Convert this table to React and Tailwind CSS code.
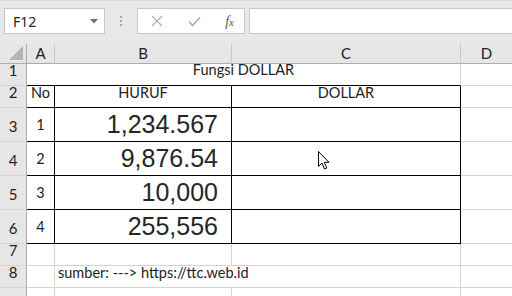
import React from 'react';

const font = { fontFamily: 'Lato, "Noto Sans", sans-serif' };

const RowHead = ({ n, top }) => (
  <div className={`flex justify-center bg-[#e6e6e6] border-r border-r-[#ababab] border-b border-b-[#d4d4d4] text-[15px] text-[#222] ${top ? 'items-start pt-[2px]' : 'items-end pb-[4px]'}`}>
    {n}
  </div>
);

const Pointer = () => (
  <svg width="13" height="20" viewBox="0 0 13 20" className="absolute left-[318px] top-[151px]">
    <path d="M0.5 0.5 L0.5 15.5 L4 12 L6.5 18 L8.8 17 L6.3 11.3 L11 11.3 Z" fill="#fff" stroke="#000" strokeWidth="1" strokeLinejoin="miter" />
  </svg>
);

const data = [
  ['1', '1,234.567'],
  ['2', '9,876.54'],
  ['3', '10,000'],
  ['4', '255,556'],
];

export default function App() {
  return (
    <div className="relative w-[512px] h-[296px] overflow-hidden bg-white text-[#222]" style={font}>
      {/* formula bar */}
      <div className="h-[44px] bg-[#e8e8e8] border-t border-[#d8d8d8] flex items-start pt-[7px] pl-[4px]">
        <div className="w-[101px] h-[26px] bg-white border border-[#c6c6c6] flex items-center justify-between pl-[8px] pr-[6px]">
          <span className="text-[14px] text-[#222]" style={{ fontFamily: '"Noto Sans", sans-serif' }}>F12</span>
          <svg width="8" height="5" viewBox="0 0 8 5"><path d="M0 0 H8 L4 4.5 Z" fill="#707070" /></svg>
        </div>
        <div className="w-[32px] h-[26px] flex flex-col items-center justify-center gap-[2px]">
          <span className="w-[2px] h-[2px] bg-[#a8a8a8]" />
          <span className="w-[2px] h-[2px] bg-[#a8a8a8]" />
          <span className="w-[2px] h-[2px] bg-[#a8a8a8]" />
        </div>
        <div className="w-[108px] h-[26px] bg-white border border-[#c6c6c6] flex items-center pl-[13px] pr-[10px] justify-between">
          <svg width="12" height="12" viewBox="0 0 12 12"><path d="M1 1 L11 11 M11 1 L1 11" stroke="#b0b0b0" strokeWidth="1.3" /></svg>
          <svg width="13" height="11" viewBox="0 0 13 11"><path d="M1 5.5 L4.5 9.5 L12 1.5" stroke="#b0b0b0" strokeWidth="1.8" fill="none" /></svg>
          <span className="text-[14px] italic text-[#555]" style={{ fontFamily: '"Liberation Serif", serif' }}>
            f<span className="text-[11px]">x</span>
          </span>
        </div>
        <div className="ml-[4px] flex-1 h-[26px] bg-white border border-[#c6c6c6] -mr-[2px]" />
      </div>

      {/* sheet */}
      <div className="grid grid-cols-[27px_28px_177px_229px_1fr] grid-rows-[20px_22px_22px_34px_34px_34px_34px_22px_22px_1fr] h-[252px] text-[14.5px]">
        {/* header row */}
        <div className="relative bg-[#e6e6e6] border-r border-r-[#ababab] border-b border-b-[#ababab]">
          <svg width="14" height="14" viewBox="0 0 14 14" className="absolute right-[3px] bottom-[3px]"><path d="M14 0 V14 H0 Z" fill="#b4b4b4" /></svg>
        </div>
        <div className="bg-[#e6e6e6] flex items-center justify-center border-b border-[#ababab] border-r border-r-[#c8c8c8] text-[15px]">A</div>
        <div className="bg-[#e6e6e6] flex items-center justify-center border-b border-[#ababab] border-r border-r-[#c8c8c8] text-[15px]">B</div>
        <div className="bg-[#e6e6e6] flex items-center justify-center border-b border-[#ababab] border-r border-r-[#c8c8c8] text-[15px]">C</div>
        <div className="bg-[#e6e6e6] flex items-center justify-center border-b border-[#ababab] text-[15px]">D</div>

        {/* row 1 */}
        <RowHead n={1} />
        <div className="col-span-3 flex items-end justify-center pb-[4px] border-b border-black border-r border-r-[#d4d4d4]">Fungsi DOLLAR</div>
        <div className="border-b border-[#d4d4d4]" />

        {/* row 2 */}
        <RowHead n={2} />
        <div className="flex items-end justify-center pb-[3px] border-r border-b border-black">No</div>
        <div className="flex items-end justify-center pb-[3px] border-r border-b border-black">HURUF</div>
        <div className="flex items-end justify-center pb-[3px] border-r border-b border-black">DOLLAR</div>
        <div className="border-b border-[#d4d4d4]" />

        {/* rows 3-6 */}
        {data.map(([no, val], i) => (
          <React.Fragment key={no}>
            <RowHead n={i + 3} />
            <div className="flex items-center justify-center border-r border-b border-black">{no}</div>
            <div className="flex items-center justify-end pr-[13px] border-r border-b border-black text-[25px] text-[#262626]" style={{ fontFamily: '"Liberation Sans", Arial, sans-serif' }}>{val}</div>
            <div className="border-r border-b border-black" />
            <div className="border-b border-[#d4d4d4]" />
          </React.Fragment>
        ))}

        {/* row 7 */}
        <RowHead n={7} />
        <div className="border-r border-b border-[#d4d4d4]" />
        <div className="border-r border-b border-[#d4d4d4]" />
        <div className="border-r border-b border-[#d4d4d4]" />
        <div className="border-b border-[#d4d4d4]" />

        {/* row 8 */}
        <RowHead n={8} />
        <div className="border-r border-b border-[#d4d4d4]" />
        <div className="col-span-2 flex items-end pl-[3px] pb-[3px] border-r border-b border-[#d4d4d4] whitespace-nowrap">sumber: ---&gt; https://ttc.web.id</div>
        <div className="border-b border-[#d4d4d4]" />

        {/* row 9 */}
        <RowHead n={9} top />
        <div className="border-r border-[#d4d4d4]" />
        <div className="border-r border-[#d4d4d4]" />
        <div className="border-r border-[#d4d4d4]" />
        <div />
      </div>

      <Pointer />
    </div>
  );
}
